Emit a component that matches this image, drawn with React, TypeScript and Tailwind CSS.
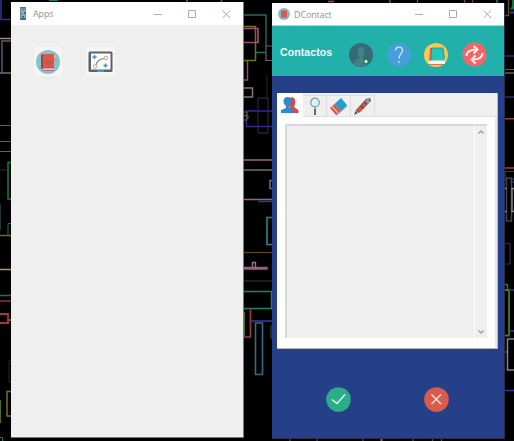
import React from "react";

type Line = { d: string; c: string; w?: number };

const wires: Line[] = [
  // left edge
  { d: "M1 0V19.500H11", c: "#283593", w: 1.6 },
  { d: "M0 38.500H11", c: "#a8917a", w: 1.4 },
  { d: "M2 73V41H11", c: "#535d69", w: 1.5 },
  { d: "M0 73H11", c: "#81667a", w: 1.5 },
  { d: "M0 125.500H11", c: "#6d6432" },
  { d: "M0 141.500H11", c: "#85485c" },
  { d: "M0 151.500H11", c: "#855a34" },
  { d: "M11 162.500H8V199H11", c: "#168045", w: 1.5 },
  { d: "M0 170H8", c: "#30333c" },
  { d: "M.5 204V230", c: "#213438" },
  { d: "M11 223.500H8V235", c: "#087c43" },
  { d: "M0 235.500H11", c: "#61731d", w: 1.5 },
  { d: "M0 269.500H11", c: "#b69b51", w: 1.5 },
  { d: "M0 295.500H11", c: "#0b7c4a", w: 1.5 },
  { d: "M0 301H11", c: "#8a2b68", w: 1.5 },
  { d: "M0 314H8V323H0M8 320H11", c: "#a23b31", w: 1.8 },
  { d: "M11 360.500H9V382H11", c: "#252530" },
  { d: "M11 391.500H7V416H11", c: "#75701f", w: 1.5 },
  { d: "M0 400V423", c: "#5b671b", w: 2 },
  { d: "M0 437.500H2.500V441", c: "#137b64" },
  // between the windows
  { d: "M243 15H266V46", c: "#236a66", w: 1.4 },
  { d: "M243 26.500H255.500V60.500H243", c: "#617d13", w: 1.5 },
  { d: "M243 28.500H258V42.500H243", c: "#a54c87", w: 1.6 },
  { d: "M256 52.500H265", c: "#246b66", w: 1.5 },
  { d: "M272 46H266V60.500H272", c: "#73606e", w: 1.2 },
  { d: "M247.500 61V80H243", c: "#99447e", w: 1.4 },
  { d: "M243 88H252.500V97H243", c: "#7c7881", w: 1.5 },
  { d: "M267 74V99", c: "#122d29" },
  { d: "M258 133V98H268V133H258", c: "#351c3a", w: 1.3 },
  { d: "M272 111H246.500V126.500H272", c: "#302b97", w: 1.5 },
  { d: "M243 112H247V120H243M244 115.500H248V119", c: "#695838" },
  { d: "M243 160H272", c: "#8d6873", w: 1.6 },
  { d: "M243 170H272", c: "#7e756f", w: 1.4 },
  { d: "M272 180.500H270V188.500H272", c: "#756b7c", w: 1.5 },
  { d: "M243 199.500H272", c: "#8c6988", w: 1.5 },
  { d: "M258 201.500H272", c: "#283d91", w: 1.5 },
  { d: "M272 217.500H267V244.500H272", c: "#2a8591", w: 1.6 },
  { d: "M243 252.500H272", c: "#5c4b1a", w: 1.2 },
  { d: "M252.500 267V262.500H255.500V270", c: "#907b85", w: 1.4 },
  { d: "M243 267.500H267V269H243", c: "#9a5f80", w: 1.4 },
  { d: "M243 281H272", c: "#453918" },
  { d: "M243 291.500H271.500V308.500H243", c: "#188864", w: 1.4 },
  { d: "M243 337H250.500V308", c: "#983d3c", w: 1.7 },
  { d: "M244.500 312V336", c: "#56651f" },
  { d: "M251 321H272", c: "#35309c", w: 1.7 },
  { d: "M255.500 323H262.500V374.500H255.500Z", c: "#376c80", w: 1.6 },
  { d: "M271 325V339", c: "#1c2d1b", w: 2 },
  // right edge
  { d: "M504 15.500H508.500V0", c: "#61512a", w: 1.4 },
  { d: "M513 0V8H511", c: "#278e57", w: 1.5 },
  { d: "M510 12.500H514", c: "#37339e", w: 2 },
  { d: "M504 56H514", c: "#342776", w: 1.5 },
  { d: "M504 69.500H514", c: "#655c66" },
  { d: "M504 73H514", c: "#776057", w: 1.4 },
  { d: "M504 97H514", c: "#302675", w: 1.6 },
  { d: "M504 118.800H514", c: "#8d462c", w: 1.5 },
  { d: "M504 168H514", c: "#8c402c", w: 1.7 },
  { d: "M504 171.500H514", c: "#493d19" },
  { d: "M505 171V181M510 179H514M510 182H514", c: "#24449a", w: 1.2 },
  { d: "M506.500 178H511.500V221H506.500Z", c: "#47404f", w: 1.5 },
  { d: "M504 188.500H506.500M504 211.500H506.500M514 188.500H512V211.500H514", c: "#8f8590", w: 1.4 },
  { d: "M504 243.500H510V264H504", c: "#322a4e", w: 1.2 },
  { d: "M504 284.500H507.500V290", c: "#14863b", w: 1.4 },
  { d: "M504 290H509V335.500H504", c: "#4e7522", w: 1.8 },
  { d: "M509 290H514M510 331H514M504 352H507", c: "#2f329f", w: 1.5 },
  { d: "M514 339H507.500V370H514", c: "#82838f", w: 1.5 },
  { d: "M504 390.500H514", c: "#3232a2", w: 1.5 },
  // top and bottom edges
  { d: "M49 .5H58M510 9H514", c: "#137b50" },
  { d: "M187 0V2M221.500 0V2M328 1.500H334", c: "#a84d39", w: 1.5 },
  { d: "M390 0V3M497 0V3", c: "#18844c", w: 1.5 },
  { d: "M417.500 0V3M464.500 0V3", c: "#883e78", w: 1.3 },
  { d: "M472.500 0V3M432.500 438V441M441.500 438V441", c: "#64501f", w: 1.3 },
  { d: "M317 438V441M363 438V441", c: "#273a84", w: 1.5 },
  { d: "M381.500 438V441", c: "#ba5260", w: 2 },
  { d: "M290 438V441M413 438V441", c: "#17634e", w: 1.4 },
];

function DesktopWires() {
  return (
    <svg className="absolute inset-0" width="514" height="441" fill="none">
      {wires.map((l, i) => (
        <path key={i} d={l.d} stroke={l.c} strokeWidth={l.w ?? 1} />
      ))}
    </svg>
  );
}

function TitleBar({ title, icon, className }: { title: string; icon: React.ReactNode; className: string }) {
  return (
    <header className={`flex shrink-0 items-center bg-white ${className}`}>
      <span className="flex w-[22px] items-center justify-center pl-[2px]">{icon}</span>
      <span className="font-['Open_Sans','Noto_Sans',sans-serif] text-[9px] leading-none tracking-[-0.15px] text-[#929292]">{title}</span>
      <svg className="ml-auto mr-3" width="78" height="10" fill="none" stroke="#ababab" strokeWidth="1">
        <path d="M1 5.500H9" />
        <path d="M35.500 1.500H42.500V8.500H35.500Z" />
        <path d="M69.500 1.500L77 9M77 1.500L69.500 9" />
      </svg>
    </header>
  );
}

function PhoneIcon() {
  return (
    <svg width="8" height="13">
      <rect x="1" width="6" height="13" rx=".7" fill="#526875" />
      <rect x="1.500" y="1.500" width="5" height="9.500" fill="#70bdc9" />
      <path d="M3 2H5V4H3ZM2 6H4V8H2Z" fill="#c67469" />
      <path d="M5 5H6.500V7H5ZM3 9H5V10.500H3Z" fill="#315d80" />
    </svg>
  );
}

function AgendaIcon({ size }: { size: number }) {
  return (
    <svg width={size} height={size} viewBox="0 0 24 24">
      <circle cx="12" cy="12" r="12" fill="#85c3ca" />
      <path d="M6 4H18V18H6Z" fill="#d75850" />
      <path d="M5 5L7 4V19H5Z" fill="#a8413f" />
      <path d="M7 18H18V20H7Z" fill="#ecd8df" />
      <path d="M5 18H18M7 20.300H18" stroke="#cf3a60" strokeWidth=".8" />
      <path d="M18 5H19.500V8H18Z" fill="#ecc36f" />
      <path d="M18 8H19.200V11H18Z" fill="#e88072" />
      <path d="M10 10.500L12.200 12L14.500 10.500V13.500L12.200 15.500L10 13.500ZM12.200 12V13.500" fill="none" stroke="#b54548" strokeWidth=".8" />
    </svg>
  );
}

function TitleAgendaIcon() {
  return (
    <svg width="12" height="12" viewBox="0 0 12 12">
      <circle cx="6" cy="6" r="6" fill="#85bdc7" />
      <path d="M3 2.500H9V9.500H3Z" fill="#d75850" />
      <path d="M3 9H9V10H3Z" fill="#c9788c" />
    </svg>
  );
}

function BoardIcon() {
  return (
    <svg width="26" height="22" viewBox="0 0 26 22" fill="none">
      <rect x=".5" y=".5" width="24" height="20.500" rx="1.500" fill="#59636f" />
      <rect x="3" y="2.500" width="19.500" height="16" fill="#fcfdfd" />
      <path d="M9 19H16V21H9Z" fill="#20adc0" />
      <path d="M8 14C9 9 12 8 16 7.500" stroke="#777c80" strokeWidth="1.200" />
      <circle cx="18" cy="7" r="1.800" stroke="#e89b6e" />
      <circle cx="7" cy="15.500" r="1.800" stroke="#e89b6e" />
      <path d="M4.500 6H8.500M6.500 4V8M15.500 14.500H19.500M17.500 12.500V16.500" stroke="#438dbb" strokeWidth="1.300" />
    </svg>
  );
}

function AddContactIcon() {
  return (
    <svg width="24" height="24" viewBox="0 0 24 24">
      <circle cx="12" cy="12" r="12" fill="#366a77" />
      <path d="M5 21C5 17 8 17 10 15.500V13C8 11 7.500 4 12 4S16 11 14 13V15.500C16 17 19 17 19 21C14 25 9 24 5 21Z" fill="#43818a" />
      <circle cx="17" cy="18.500" r="2.800" fill="#178d4b" />
      <path d="M17 17V20M15.500 18.500H18.500" stroke="#f4f7eb" strokeWidth="1.500" />
    </svg>
  );
}

function HelpIcon() {
  return (
    <svg width="24" height="24" viewBox="0 0 24 24" fill="none">
      <circle cx="12" cy="12" r="12" fill="#469edb" />
      <path d="M8.500 7.500C8.500 3 15.500 3 15.500 7.500C15.500 10.500 12 11 12 15.500M12 18V20" stroke="#d4e9f5" strokeWidth="1.300" />
    </svg>
  );
}

function BookIcon() {
  return (
    <svg width="24" height="24" viewBox="0 0 24 24">
      <circle cx="12" cy="12" r="12" fill="#fdc653" />
      <path d="M6 5H8V18H5Z" fill="#e66253" />
      <path d="M8 5H19L21 18H7Z" fill="#22c8b9" />
      <path d="M8 5H19L20.500 15M7.500 5L7 18" stroke="#218e91" strokeWidth=".8" fill="none" />
      <path d="M11 15H16M12 16H15" stroke="#8fb088" strokeWidth=".7" />
      <path d="M6 17.500H21V21H6C4 21 4 17.500 6 17.500Z" fill="#fff5e8" />
      <path d="M5 21.500H20" stroke="#e3554e" strokeWidth=".8" />
    </svg>
  );
}

function SyncIcon() {
  return (
    <svg width="25" height="25" viewBox="0 0 25 25" fill="none">
      <circle cx="12.500" cy="12.500" r="12" fill="#f86464" />
      <path d="M4.500 14C4.500 9 9 7.500 15 7.500M20.500 11C20.500 16 16 17.500 10 17.500" stroke="#fff6f1" strokeWidth="2" />
      <path d="M11.500 4L15.500 7.500L11.500 11.500M13.500 13.500L9.500 17.500L13.500 21.500" stroke="#fff6f1" strokeWidth="1.900" />
    </svg>
  );
}

function PeopleIcon() {
  return (
    <svg width="20" height="17" viewBox="0 0 20 17">
      <path d="M9 1C14 -1 16 2 15 7L14 10L18.500 13V16H10Z" fill="#d6494e" />
      <path d="M1 16V13L6 11V9C2 6 3 0 7.500 0S12 6 9.500 9V11L14 13V16Z" fill="#2d8bcb" />
    </svg>
  );
}

function SearchIcon() {
  return (
    <svg width="12" height="19" viewBox="0 0 12 19" fill="none">
      <circle cx="6" cy="5.500" r="4.300" fill="#d7f0f7" stroke="#789aa8" strokeWidth="1.200" />
      <path d="M4 5.500C4 3.500 5 3 7 3" stroke="#fff" />
      <path d="M6 10V18" stroke="#888" strokeWidth="1.200" />
      <path d="M6 12V18" stroke="#55575b" strokeWidth="1.600" />
    </svg>
  );
}

function EraserIcon() {
  return (
    <svg width="19" height="19" viewBox="0 0 19 19">
      <path d="M5.500 7L12 1L18 8L11.500 14Z" fill="#269bce" />
      <path d="M1 11L5.500 7L11.500 14L7 18Z" fill="#dd5147" />
      <path d="M3 9.500L9 16" stroke="#f2b9aa" strokeWidth="1.200" />
      <path d="M7 17.500L18 8V9.500L7.500 18.500Z" fill="#7d9197" />
    </svg>
  );
}

function PenIcon() {
  return (
    <svg width="19" height="19" viewBox="0 0 19 19" fill="none">
      <path d="M1 18L3 13L13 2L17 1L18 4L7 15Z" fill="#575154" />
      <path d="M3.500 13L11 5.500L13.500 8L6 15.500Z" fill="#db5147" />
      <path d="M12.500 5L16 2M14 6L17 4" stroke="#bfbcbd" strokeWidth="1.200" />
      <path d="M8 9L10.500 11.500" stroke="#76383c" strokeWidth="1.200" />
      <path d="M3 14L5 16" stroke="#bebab8" />
    </svg>
  );
}

function Chevron({ up = false }: { up?: boolean }) {
  return (
    <svg width="8" height="6" fill="none" stroke={up ? "#78aaae" : "#91a1a5"} strokeWidth="1.300">
      <path d={up ? "M1.500 4.500L4 2L6.500 4.500" : "M1.500 1.500L4 4L6.500 1.500"} />
    </svg>
  );
}

export default function App() {
  return (
    <main className="relative h-[441px] w-[514px] overflow-hidden bg-black">
      <DesktopWires />

      <section className="absolute left-[11px] top-[2px] flex h-[436px] w-[233px] flex-col border-b border-r border-[#777] bg-[#efefef]">
        <TitleBar title="Apps" icon={<PhoneIcon />} className="h-[23px]" />
        <div className="flex gap-6 pl-[23px] pt-[22px]">
          <button className="flex h-[29px] w-[28px] items-center justify-center bg-[#f5f5f5]"><AgendaIcon size={24} /></button>
          <button className="flex h-[29px] w-[29px] items-center justify-center bg-[#f5f5f5]"><BoardIcon /></button>
        </div>
      </section>

      <section className="absolute left-[272px] top-[3px] flex h-[436px] w-[233px] flex-col border-b border-r border-[#2b2d48] bg-[#263f89]">
        <TitleBar title="DContact" icon={<TitleAgendaIcon />} className="h-[22px]" />
        <div className="flex h-[51px] shrink-0 items-center border-t border-[#b9d5d3] bg-[#22b1aa] pl-2 pt-[7px]">
          <h1 className="w-[69px] pb-1 font-['Liberation_Sans',Arial,sans-serif] text-[10.5px] font-bold leading-none tracking-[0.1px] text-[#f5fcfb]">Contactos</h1>
          <div className="flex items-center gap-[13.500px]">
            <AddContactIcon /><HelpIcon /><BookIcon /><SyncIcon />
          </div>
        </div>

        <div className="ml-[5px] mt-[17px] flex h-[256px] w-[221px] shrink-0 flex-col border-b border-r border-[#b9b9bd] bg-white">
          <div className="flex h-6 shrink-0 items-end bg-[#efefef]">
            <div className="flex h-6 w-[26px] items-center justify-center bg-white"><PeopleIcon /></div>
            <div className="flex h-[22px] w-6 items-center justify-center border-b border-r border-t border-[#dedede]"><SearchIcon /></div>
            <div className="flex h-[22px] w-6 items-center justify-center border-b border-r border-t border-[#dedede]"><EraserIcon /></div>
            <div className="flex h-[22px] w-6 items-center justify-center border-b border-r border-t border-[#dedede]"><PenIcon /></div>
            <div className="h-px flex-1 bg-[#dedede]" />
          </div>
          <div className="flex flex-1 border-r-2 border-[#e7e7e7] pb-[10px] pl-2 pr-2 pt-[7px]">
            <div className="flex flex-1 border-l-2 border-t-2 border-[#d9d9d9] bg-[#efefef]">
              <div className="ml-auto flex w-[13px] flex-col items-center justify-between border-l border-white py-[3px]">
                <Chevron up /><Chevron />
              </div>
            </div>
          </div>
        </div>

        <div className="flex gap-[73px] pl-[54px] pt-[38px]">
          <svg width="25" height="25" fill="none">
            <circle cx="12.500" cy="12.500" r="12.300" fill="#29ae88" />
            <path d="M6 12.500L11 16.500L19 7.500" stroke="#eafaf6" strokeWidth="1.300" />
          </svg>
          <svg width="25" height="25" fill="none">
            <circle cx="12.500" cy="12.500" r="12.300" fill="#d85b4c" />
            <path d="M7.500 7.500L17 17M17 7.500L7.500 17" stroke="#fae9e3" strokeWidth="1.400" />
          </svg>
        </div>
      </section>
    </main>
  );
}
